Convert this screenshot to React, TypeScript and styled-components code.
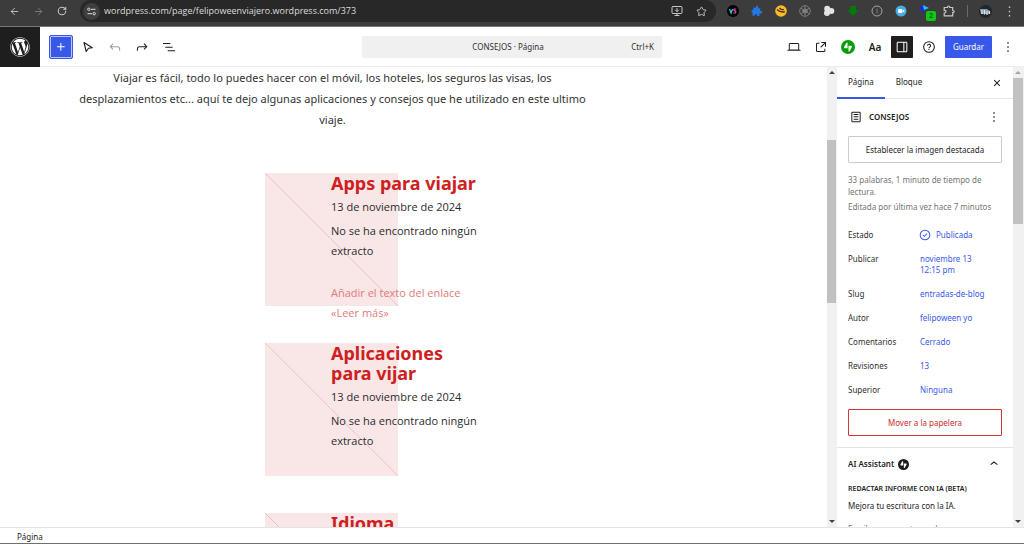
import React from "react";
import styled, { createGlobalStyle } from "styled-components";
import { FaWordpress } from "react-icons/fa";
import { ArrowLeft, ArrowRight, RotateCw, Star, MonitorDown } from "lucide-react";

const blue = "#3858e9";
const red = "#cf2020";
const ink = "#1e1e1e";

const GlobalStyle = createGlobalStyle`
  * { box-sizing: border-box; }
  body {
    margin: 0;
    overflow: hidden;
    font-family: "Noto Sans", "Open Sans", sans-serif;
    font-size: 8px;
    line-height: 12px;
    color: ${ink};
    background: #fff;
  }
  h1, h2, h3, p, dl, dd, dt, ul { margin: 0; padding: 0; }
  button, input { font: inherit; color: inherit; }
  a { color: inherit; text-decoration: none; }
  svg { display: block; flex: none; }
`;

const paths = {
  plus: "M11 12.5V17.5H12.5V12.5H17.5V11H12.5V6H11V11H6V12.5H11Z",
  undo: "M18.3 11.7c-.6-.6-1.4-.9-2.3-.9H6.7l2.9-3.3-1.1-1-4.5 5L8.5 16l1-1-2.7-2.7H16c.5 0 .9.2 1.3.5 1 1 1 3.4 1 4.5v.3h1.5v-.2c0-1.5 0-4.3-1.5-5.7z",
  redo: "M15.6 6.5l-1.1 1 2.9 3.3H8c-.9 0-1.7.3-2.3.9-1.4 1.5-1.4 4.2-1.4 5.6v.2h1.5v-.3c0-1.1 0-3.5 1-4.5.3-.3.7-.5 1.3-.5h9.2L14.5 15l1.1 1.1 4.6-4.6-4.6-5z",
  list: "M3 6h11v1.5H3V6Zm3.5 5.5h11V13h-11v-1.5ZM21 17H10v1.5h11V17Z",
  laptop: "M20.5 16h-.7V8c0-1.1-.9-2-2-2H6.2c-1.1 0-2 .9-2 2v8h-.7c-.8 0-1.5.7-1.5 1.5h20c0-.8-.7-1.5-1.5-1.5zM5.7 8c0-.3.2-.5.5-.5h11.6c.3 0 .5.2.5.5v7.6H5.7V8z",
  external: "M19.5 4.5h-7V6h4.44l-5.97 5.97 1.06 1.06L18 7.06v4.44h1.5v-7Zm-13 1a2 2 0 0 0-2 2v10a2 2 0 0 0 2 2h10a2 2 0 0 0 2-2v-3H17v3a.5.5 0 0 1-.5.5h-10a.5.5 0 0 1-.5-.5v-10a.5.5 0 0 1 .5-.5h3V5.5h-3Z",
  drawer: "M18 4H6c-1.1 0-2 .9-2 2v12c0 1.1.9 2 2 2h12c1.1 0 2-.9 2-2V6c0-1.1-.9-2-2-2zm-4 14.5H6c-.3 0-.5-.2-.5-.5V6c0-.3.2-.5.5-.5h8v13zm4.5-.5c0 .3-.2.5-.5.5h-2.5v-13H18c.3 0 .5.2.5.5v12z",
  more: "M13 19h-2v-2h2v2zm0-6h-2v-2h2v2zm0-6h-2V5h2v2z",
  page: "M15.5 7.5h-7V9h7V7.5Zm-7 3.5h7v1.5h-7V11Zm7 3.5h-7V16h7v-1.5ZM17 4H7a2 2 0 0 0-2 2v12a2 2 0 0 0 2 2h10a2 2 0 0 0 2-2V6a2 2 0 0 0-2-2ZM7 5.5h10a.5.5 0 0 1 .5.5v12a.5.5 0 0 1-.5.5H7a.5.5 0 0 1-.5-.5V6a.5.5 0 0 1 .5-.5Z",
  close: "M12 13.06l3.712 3.713 1.061-1.06L13.061 12l3.712-3.712-1.06-1.06L12 10.938 8.288 7.227l-1.061 1.06L10.939 12l-3.712 3.712 1.06 1.061L12 13.061z",
  chevronUp: "M6.5 12.4L12 8l5.5 4.4-.9 1.2L12 10l-4.5 3.6-1-1.2z",
  published: "M12 18.5a6.5 6.5 0 1 1 0-13 6.5 6.5 0 0 1 0 13ZM4 12a8 8 0 1 1 16 0 8 8 0 0 1-16 0Zm11.53-1.47-1.06-1.06L11 12.94l-1.47-1.47-1.06 1.06L11 15.06l4.53-4.53Z",
};

const Icon = ({ name, size = 16 }: { name: keyof typeof paths; size?: number }) => (
  <svg width={size} height={size} viewBox="0 0 24 24" fill="currentColor" fillRule="evenodd" aria-hidden="true">
    <path d={paths[name]} />
  </svg>
);

const Jetpack = ({ size, color }: { size: number; color: string }) => (
  <svg width={size} height={size} viewBox="0 0 32 32" aria-hidden="true">
    <circle cx="16" cy="16" r="16" fill={color} />
    <path d="M15 19H9q-3 0-2-3l5-9q3-3 3 0zM17 13h6q3 0 2 3l-5 9q-3 3-3 0z" fill="#fff" />
  </svg>
);

const Window = styled.div`
  display: grid;
  grid-template-rows: 27px 40px minmax(0, 1fr) 17px;
  height: 100vh;
`;

/* Browser toolbar */
const BrowserBar = styled.div`
  display: flex;
  align-items: flex-start;
  padding: 0 3px 0 2px;
  background: #3c3c3c;
  border-bottom: 1px solid #777;
  color: #c7c7c7;
`;
const BarButton = styled.button<{ $dim?: boolean }>`
  position: relative;
  display: grid;
  place-items: center;
  flex: none;
  width: 24px;
  height: 22px;
  padding: 0;
  border: 0;
  background: none;
  color: ${(p) => (p.$dim ? "#7d7d7d" : "#c7c7c7")};
`;
const AddressBar = styled.form`
  display: flex;
  align-items: center;
  flex: 1;
  height: 22px;
  margin: 0 5px 0 6px;
  padding: 0 3px;
  border-radius: 11px;
  background: #282828;
`;
const SiteInfo = styled.button`
  display: grid;
  place-items: center;
  width: 17px;
  height: 17px;
  padding: 0;
  border: 0;
  border-radius: 50%;
  background: #3f3f3f;
  color: #ddd;
`;
const Address = styled.input`
  flex: 1;
  min-width: 0;
  padding: 0 4px;
  border: 0;
  background: none;
  color: #dcdcdc;
  font-family: "Open Sans", sans-serif;
  font-size: 9px;
  line-height: 14px;
`;
const BarDivider = styled.span`
  width: 1px;
  height: 12px;
  margin: 5px 5px 0 6px;
  background: #6a6a6a;
`;
const ExtBadge = styled.span`
  position: absolute;
  right: 1px;
  bottom: 1px;
  width: 10px;
  height: 10px;
  border-radius: 2px;
  background: #12c912;
  color: #063;
  font-size: 7px;
  font-weight: 700;
  line-height: 10px;
`;

/* Editor header */
const Header = styled.header`
  display: grid;
  grid-template-columns: 1fr 300px 1fr;
  align-items: center;
  border-bottom: 1px solid #ececec;
`;
const ToolGroup = styled.div<{ $end?: boolean }>`
  display: flex;
  align-items: center;
  gap: ${(p) => (p.$end ? 5 : 7)}px;
  justify-content: ${(p) => (p.$end ? "flex-end" : "flex-start")};
  padding-right: ${(p) => (p.$end ? 5 : 0)}px;
`;
const SiteHub = styled.a`
  display: grid;
  place-items: center;
  width: 40px;
  height: 40px;
  margin-right: 2px;
  background: ${ink};
  color: #fff;
`;
const Inserter = styled.button`
  display: grid;
  place-items: center;
  width: 24px;
  height: 24px;
  margin-right: -2px;
  padding: 0;
  border: 1px solid ${blue};
  border-radius: 2px;
  background: ${blue};
  box-shadow: inset 0 0 0 1px #b9c4f8;
  color: #fff;
`;
const Tool = styled.button<{ $w?: number; $active?: boolean; $dim?: boolean }>`
  display: grid;
  place-items: center;
  width: ${(p) => p.$w ?? 22}px;
  height: 22px;
  padding: 0;
  border: 0;
  border-radius: 1px;
  background: ${(p) => (p.$active ? ink : "none")};
  color: ${(p) => (p.$active ? "#fff" : p.$dim ? "#999" : ink)};
  font-size: 10px;
  font-weight: 600;
`;
const Command = styled.button`
  display: grid;
  grid-template-columns: 1fr auto 1fr;
  align-items: center;
  height: 22px;
  padding: 0 8px;
  border: 0;
  border-radius: 2px;
  background: #f0f0f0;
  color: #2f2f2f;
`;
const Shortcut = styled.span`
  grid-column: 3;
  justify-self: end;
`;
const CommandTitle = styled.span`
  grid-column: 2;
  padding-right: 8px;
`;
const Save = styled.button`
  width: 47px;
  height: 22px;
  padding: 0;
  border: 0;
  border-radius: 1px;
  background: ${blue};
  color: #fff;
`;

/* Work area */
const Body = styled.div`
  display: grid;
  grid-template-columns: minmax(0, 1fr) 10px 176px 11px;
  min-height: 0;
`;
const Canvas = styled.main`
  display: flex;
  flex-direction: column;
  align-items: center;
  gap: 43px;
  overflow: hidden;
  padding-right: 162px;
`;
const Intro = styled.p`
  flex: none;
  max-width: 524px;
  font-size: 11px;
  line-height: 21px;
  text-align: center;
  color: #333;
`;
const Posts = styled.ul`
  display: grid;
  grid-auto-rows: minmax(150px, auto);
  row-gap: 20px;
  width: 135px;
  list-style: none;
`;
const Post = styled.li`
  display: grid;
  grid-template-columns: 66px 152px;
`;
const Placeholder = styled.div`
  width: 133px;
  height: 133px;
  background: #f9e6e7;
`;
const PostText = styled.div`
  z-index: 1;
  font-family: "Open Sans", "Noto Sans", sans-serif;
  font-size: 11px;
  line-height: 20px;
  color: #2c2c2c;
`;
const PostTitle = styled.h2`
  font-family: "Noto Sans", sans-serif;
  font-size: 18px;
  font-weight: 700;
  line-height: 20px;
  color: ${red};
`;
const PostDate = styled.time`
  display: block;
  margin: 4px 0;
`;
const ReadMore = styled.a`
  display: block;
  width: 140px;
  margin-top: 22px;
  color: #e07b7b;
`;

/* Scroll bars */
const Track = styled.div`
  display: flex;
  flex-direction: column;
  padding: 0 1px 0 0;
  background: #f1f1f1;
`;
const Arrow = styled.span<{ $down?: boolean; $dim?: boolean }>`
  display: grid;
  place-items: center;
  height: 11px;
  &::before {
    content: "";
    border: 3px solid transparent;
    border-top-width: ${(p) => (p.$down ? 3 : 0)}px;
    border-bottom-width: ${(p) => (p.$down ? 0 : 3)}px;
    border-${(p) => (p.$down ? "top" : "bottom")}-color: ${(p) => (p.$dim ? "#a3a3a3" : "#404040")};
  }
`;
const Share = styled.span<{ $grow: number; $thumb?: boolean }>`
  flex: ${(p) => p.$grow} 0 0;
  background: ${(p) => (p.$thumb ? "#c1c1c1" : "none")};
`;
const ScrollBar = ({ before, thumb, after }: { before: number; thumb: number; after: number }) => (
  <Track aria-hidden="true">
    <Arrow $dim={before === 0} />
    <Share $grow={before} />
    <Share $grow={thumb} $thumb />
    <Share $grow={after} />
    <Arrow $down />
  </Track>
);

/* Settings sidebar */
const Sidebar = styled.aside`
  overflow: hidden;
`;
const Tabs = styled.div`
  display: flex;
  align-items: stretch;
  height: 32px;
  border-bottom: 1px solid #e4e4e4;
`;
const Tab = styled.button<{ $on?: boolean }>`
  padding: 0 11px;
  margin-bottom: -1px;
  border: 0;
  border-bottom: 2px solid ${(p) => (p.$on ? blue : "transparent")};
  background: none;
`;
const IconButton = styled.button`
  display: grid;
  place-items: center;
  width: 16px;
  margin-left: auto;
  padding: 0;
  border: 0;
  background: none;
`;
const TabClose = styled(IconButton)`
  margin-right: 8px;
`;
const Section = styled.section<{ $top: number }>`
  padding: ${(p) => p.$top}px 11px 11px;
  border-bottom: 1px solid #e4e4e4;
`;
const SectionHead = styled.div<{ $gap: number }>`
  display: flex;
  align-items: center;
  gap: ${(p) => p.$gap}px;
  height: 16px;
`;
const SectionTitle = styled.h2`
  font-size: 8px;
  font-weight: 600;
  line-height: 12px;
`;
const WideButton = styled.button<{ $danger?: boolean }>`
  display: block;
  width: 100%;
  height: 27px;
  margin: ${(p) => (p.$danger ? "14px 0 0" : "11px 0")};
  border: 1px solid ${(p) => (p.$danger ? "#d63638" : "#ccc")};
  border-radius: 1px;
  background: none;
  color: ${(p) => (p.$danger ? "#cc2b2e" : ink)};
`;
const Meta = styled.p`
  margin-bottom: 3px;
  color: #757575;
`;
const Fields = styled.dl`
  display: grid;
  grid-template-columns: 72px 1fr;
  gap: 13px 0;
  margin-top: 16px;
  line-height: 11px;
`;
const FieldName = styled.dt`
  color: #2f2f2f;
`;
const FieldValue = styled.dd`
  color: ${blue};
`;
const StatusLink = styled.a`
  display: flex;
  align-items: center;
  gap: 3px;
  height: 11px;
  margin-left: -3px;
`;
const Subtitle = styled.h3`
  margin: 11px 0 5px;
  font-size: 7px;
  font-weight: 600;
  line-height: 12px;
`;
const Hint = styled.p`
  margin-top: 11px;
  color: #757575;
`;

const Footer = styled.footer`
  padding: 3px 17px 0;
  border-top: 1px solid #e4e4e4;
  border-bottom: 1px solid #6f6f6f;
  line-height: 12px;
`;

const posts = [
  { title: "Apps para viajar", more: true },
  { title: "Aplicaciones para vijar", more: false },
  { title: "Idioma", more: false },
];

const fields: [string, React.ReactNode][] = [
  ["Estado", <StatusLink key="e" href="#estado"><Icon name="published" />Publicada</StatusLink>],
  ["Publicar", <a key="p" href="#publicar">noviembre 13<br />12:15 pm</a>],
  ["Slug", <a key="s" href="#slug">entradas-de-blog</a>],
  ["Autor", <a key="a" href="#autor">felipoween yo</a>],
  ["Comentarios", <a key="c" href="#comentarios">Cerrado</a>],
  ["Revisiones", <a key="r" href="#revisiones">13</a>],
  ["Superior", <a key="u" href="#superior">Ninguna</a>],
];

const Extensions = () => (
  <>
    <BarButton aria-label="VS">
      <svg width="12" height="12" viewBox="0 0 12 12"><circle cx="6" cy="6" r="6" fill="#000" /><path d="M2.5 4l1.6 4 1.4-4" fill="none" stroke="#2fd0d8" strokeWidth="1.2" /><path d="M9.300 4H7.200q-1 1 .2 1.800h.8q1.300 1.200 0 2.200H6.300" fill="none" stroke="#e44fb0" strokeWidth="1.2" /></svg>
    </BarButton>
    <BarButton aria-label="Complemento">
      <svg width="12" height="12" viewBox="0 0 12 12"><path d="M2 3h2.5Q3.8.8 5.6.8T6.700 3H9v2.700q2.400-.7 2.400 1T9 7.800V11H7Q6.800 9 5.600 9T4.200 11H2V8.200q-1.500 0-1.500-1.300T2 5.500z" fill="#2378e8" transform="rotate(8 6 6)" /></svg>
    </BarButton>
    <BarButton aria-label="Ahorro">
      <svg width="12" height="12" viewBox="0 0 12 12"><circle cx="6" cy="6" r="5.800" fill="#fdbb2b" /><path d="M2 4.500Q5 7.500 9.800 6.800M4.500 2.800Q6 5 9 4.600" fill="none" stroke="#4a3512" strokeWidth="1.400" /></svg>
    </BarButton>
    <BarButton aria-label="Red">
      <svg width="12" height="12" viewBox="0 0 12 12" fill="none" stroke="#8d8d8d" strokeWidth=".8"><circle cx="6" cy="6" r="5.300" /><circle cx="6" cy="6" r="2" /><path d="M6 1v10M2 3.200l8 5.600M10 3.200L2 8.800M3 6h6" /></svg>
    </BarButton>
    <BarButton aria-label="Nube">
      <svg width="12" height="12" viewBox="0 0 12 12" fill="#e4e4e4"><circle cx="4.200" cy="3.800" r="3" /><circle cx="4" cy="8" r="3" /><circle cx="8.300" cy="6" r="3" /></svg>
    </BarButton>
    <BarButton aria-label="Descargar">
      <svg width="12" height="12" viewBox="0 0 12 12"><path d="M3 1h6v4.500h2.500L6 11 .5 5.500H3z" fill="#067a06" /></svg>
    </BarButton>
    <BarButton aria-label="Información">
      <svg width="12" height="12" viewBox="0 0 12 12" fill="none" stroke="#a5a5a5"><circle cx="6" cy="6" r="5" /><path d="M6 3.500v5" strokeOpacity=".6" /></svg>
    </BarButton>
    <BarButton aria-label="Grabar">
      <svg width="12" height="12" viewBox="0 0 12 12"><circle cx="6" cy="6" r="5.500" fill="#45aee6" /><rect x="3" y="4" width="4.300" height="4" rx="1" fill="#fff" /><path d="M7.300 5.800L9.300 4.400v3.200L7.300 6.200z" fill="#fff" /></svg>
    </BarButton>
    <BarButton aria-label="Etiquetas">
      <svg width="14" height="14" viewBox="0 0 14 14"><path d="M1 3l5-1v8z" fill="#1726e8" /><path d="M5 1l6 3-5 2z" fill="#22c3f3" /></svg>
      <ExtBadge>2</ExtBadge>
    </BarButton>
    <BarButton aria-label="Extensiones">
      <svg width="12" height="12" viewBox="0 0 12 12" fill="none" stroke="#c7c7c7" strokeWidth="1.200"><path d="M1.200 2.500h3.300Q4.500 1 5.600 1t1.100 1.500h3v3Q11.200 5.500 11.200 6.600T9.700 7.700v3.100H1.200V8Q3 8 3 6.600T1.200 5.300z" /></svg>
    </BarButton>
  </>
);

export default function App() {
  return (
    <>
      <GlobalStyle />
      <Window>
        <BrowserBar>
          <BarButton aria-label="Atrás"><ArrowLeft size={11} /></BarButton>
          <BarButton aria-label="Adelante" $dim><ArrowRight size={11} /></BarButton>
          <BarButton aria-label="Recargar"><RotateCw size={10} strokeWidth={2.5} /></BarButton>
          <AddressBar>
            <SiteInfo type="button" aria-label="Información del sitio">
              <svg width="9" height="9" viewBox="0 0 9 9" fill="none" stroke="currentColor"><circle cx="1.800" cy="2.300" r="1.200" /><path d="M4 2.300h4.500M.5 6.700H5" /><circle cx="7.200" cy="6.700" r="1.200" /></svg>
            </SiteInfo>
            <Address aria-label="Dirección" defaultValue="wordpress.com/page/felipoweenviajero.wordpress.com/373" />
            <BarButton type="button" aria-label="Instalar"><MonitorDown size={12} /></BarButton>
            <BarButton type="button" aria-label="Favorito"><Star size={11} /></BarButton>
          </AddressBar>
          <Extensions />
          <BarDivider />
          <BarButton aria-label="Perfil">
            <svg width="13" height="13" viewBox="0 0 13 13"><circle cx="6.500" cy="6.500" r="6.500" fill="#20262b" /><path d="M1 4h7l3 2v3H2z" fill="#8397a5" /><path d="M3 5v4M5.500 5v4.500M8 6v4M10.500 6v3" stroke="#dfe5e8" strokeWidth="1.200" /></svg>
          </BarButton>
          <BarButton aria-label="Menú"><Icon name="more" size={17} /></BarButton>
        </BrowserBar>

        <Header>
          <ToolGroup>
            <SiteHub href="#sitio" aria-label="WordPress"><FaWordpress size={20} /></SiteHub>
            <Inserter aria-label="Añadir bloque"><Icon name="plus" /></Inserter>
            <Tool $w={20} aria-label="Seleccionar">
              <svg width="16" height="16" viewBox="0 0 16 16" fill="none" stroke="currentColor" strokeWidth="1.100" strokeLinejoin="round"><path d="M4 3.500l8.300 5.200-3.800.5-2.300 3.300z" /></svg>
            </Tool>
            <Tool $w={20} $dim aria-label="Deshacer"><Icon name="undo" /></Tool>
            <Tool $w={20} aria-label="Rehacer"><Icon name="redo" /></Tool>
            <Tool $w={20} aria-label="Vista de lista"><Icon name="list" /></Tool>
          </ToolGroup>
          <Command>
            <CommandTitle>CONSEJOS · Página</CommandTitle>
            <Shortcut>Ctrl+K</Shortcut>
          </Command>
          <ToolGroup $end>
            <Tool aria-label="Vista"><Icon name="laptop" /></Tool>
            <Tool aria-label="Ver página"><Icon name="external" /></Tool>
            <Tool aria-label="Jetpack"><Jetpack size={14} color="#069e08" /></Tool>
            <Tool aria-label="Estilos">Aa</Tool>
            <Tool $active aria-label="Ajustes"><Icon name="drawer" /></Tool>
            <Tool aria-label="Ayuda">
              <svg width="16" height="16" viewBox="0 0 24 24" fill="none" stroke="currentColor" strokeWidth="1.600"><circle cx="12" cy="12" r="8" /><path d="M9.700 10.200a2.300 2.300 0 1 1 3.400 2q-1.100.6-1.100 1.600M12 15v1.600" /></svg>
            </Tool>
            <Save>Guardar</Save>
            <Tool aria-label="Opciones"><Icon name="more" /></Tool>
          </ToolGroup>
        </Header>

        <Body>
          <Canvas>
            <Intro>
              Viajar es fácil, todo lo puedes hacer con el móvil, los hoteles, los seguros las visas, los
              desplazamientos etc... aquí te dejo algunas aplicaciones y consejos que he utilizado en este ultimo
              viaje.
            </Intro>
            <Posts>
              {posts.map((post) => (
                <Post key={post.title}>
                  <Placeholder>
                    <svg width="133" height="133" viewBox="0 0 133 133" stroke="#f1bfc4"><path d="M0 0l133 133" /></svg>
                  </Placeholder>
                  <PostText>
                    <PostTitle>{post.title}</PostTitle>
                    <PostDate dateTime="2024-11-13">13 de noviembre de 2024</PostDate>
                    <p>No se ha encontrado ningún extracto</p>
                    {post.more && <ReadMore href="#mas">Añadir el texto del enlace «Leer más»</ReadMore>}
                  </PostText>
                </Post>
              ))}
            </Posts>
          </Canvas>
          <ScrollBar before={62} thumb={163} after={213} />
          <Sidebar>
            <Tabs role="tablist">
              <Tab role="tab" aria-selected="true" $on>Página</Tab>
              <Tab role="tab" aria-selected="false">Bloque</Tab>
              <TabClose aria-label="Cerrar"><Icon name="close" /></TabClose>
            </Tabs>
            <Section $top={10}>
              <SectionHead $gap={5}>
                <Icon name="page" />
                <SectionTitle>CONSEJOS</SectionTitle>
                <IconButton aria-label="Acciones"><Icon name="more" /></IconButton>
              </SectionHead>
              <WideButton>Establecer la imagen destacada</WideButton>
              <Meta>33 palabras, 1 minuto de tiempo de lectura.</Meta>
              <Meta>Editada por última vez hace 7 minutos</Meta>
              <Fields>
                {fields.map(([name, value]) => (
                  <React.Fragment key={name}>
                    <FieldName>{name}</FieldName>
                    <FieldValue>{value}</FieldValue>
                  </React.Fragment>
                ))}
              </Fields>
              <WideButton $danger>Mover a la papelera</WideButton>
            </Section>
            <Section $top={8}>
              <SectionHead $gap={4}>
                <SectionTitle>AI Assistant</SectionTitle>
                <Jetpack size={11} color={ink} />
                <IconButton aria-label="Contraer"><Icon name="chevronUp" /></IconButton>
              </SectionHead>
              <Subtitle>REDACTAR INFORME CON IA (BETA)</Subtitle>
              <p>Mejora tu escritura con la IA.</p>
              <Hint>Escriba para ver tu grado</Hint>
            </Section>
          </Sidebar>
          <ScrollBar before={0} thumb={146} after={292} />
        </Body>
        <Footer>Página</Footer>
      </Window>
    </>
  );
}
